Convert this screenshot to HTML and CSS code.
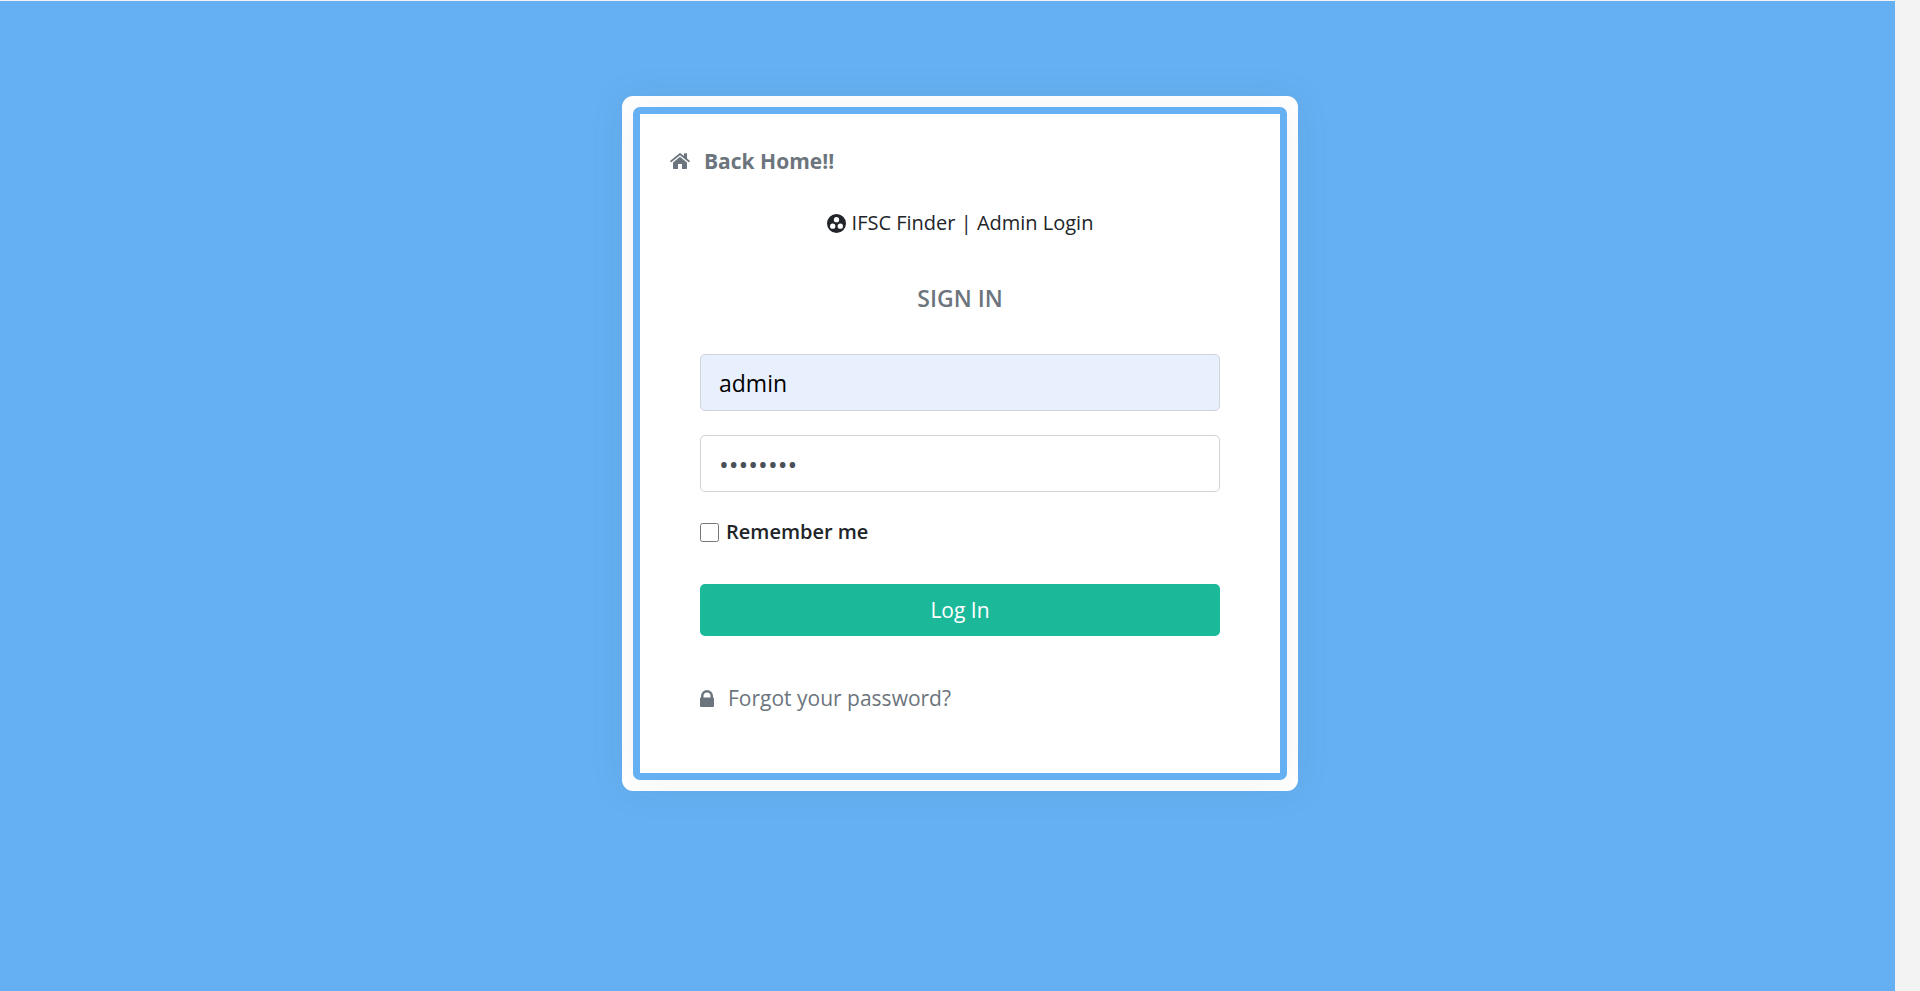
FILE: index.html
```html
<!DOCTYPE html>
<html lang="en">
<head>
<meta charset="utf-8">
<title>IFSC Finder | Admin Login</title>
<link rel="stylesheet" href="styles.css">
</head>
<body>
<main class="page">
  <div class="card">
    <div class="panel">
      <a class="home-link" href="#">
        <svg class="icon-home" viewBox="0 0 20 16" aria-hidden="true">
          <path d="M10 3.7 3 9.400V15.200q0 .8.8.8H8v-5h4v5h4.200q.8 0 .8-.8V9.400Z"/>
          <path d="M9.200.4q.8-.6 1.600 0L14 3V.8q0-.5.5-.5h2q.5 0 .5.500V5.500l2.700 2.200q.4.300.1.700l-.6.700q-.3.300-.7 0L10 2.200 1.500 9.100q-.4.300-.7 0l-.6-.7q-.3-.4.100-.700Z"/>
        </svg>
        <span>Back Home!!</span>
      </a>
      <h1 class="brand">
        <svg class="icon-brand" viewBox="0 0 20 20" aria-hidden="true">
          <path fill-rule="evenodd" d="M10 0a10 10 0 1 0 0 20 10 10 0 0 0 0-20Zm0 3.200a2.800 2.800 0 1 1 0 5.600 2.800 2.800 0 0 1 0-5.600ZM6 10a2.800 2.800 0 1 1 0 5.600A2.800 2.800 0 0 1 6 10Zm8 0a2.800 2.800 0 1 1 0 5.600 2.800 2.800 0 0 1 0-5.600Z"/>
        </svg>
        <span>IFSC Finder | Admin Login</span>
      </h1>
      <h2 class="title">SIGN IN</h2>
      <form class="form">
        <input class="field field-filled" type="text" value="admin" aria-label="Username">
        <input class="field field-password" type="password" value="password" aria-label="Password">
        <div class="remember">
          <input class="check" type="checkbox" id="remember">
          <label for="remember">Remember me</label>
        </div>
        <button class="submit" type="submit">Log In</button>
        <a class="forgot" href="#">
          <svg class="icon-lock" viewBox="0 0 14 17" aria-hidden="true">
            <path fill-rule="evenodd" d="M1 7.500V6a6 6 0 0 1 12 0v1.500q1 0 1 1V16q0 1-1 1H1q-1 0-1-1V8.500q0-1 1-1Zm2.500 0h7V6a3.500 3.500 0 0 0-7 0Z"/>
          </svg>
          <span>Forgot your password?</span>
        </a>
      </form>
    </div>
  </div>
</main>
</body>
</html>
```
FILE: styles.css
```css
* {
  box-sizing: border-box;
}

body {
  margin: 0;
  padding: 1px 25px 0 0;
  background: #f3f3f3;
  color: #212529;
  font-family: "Segoe UI", "Open Sans", "Noto Sans", sans-serif;
  font-size: 21px;
  line-height: 32px;
}

.page {
  min-height: calc(100vh - 1px);
  padding: 95px 0 95px 25px;
  background: #64b0f2;
}

.card {
  max-width: 676px;
  margin: 0 auto;
  padding: 11px;
  border-radius: 11px;
  background: #fff;
  box-shadow: 0 0 35px rgba(120, 135, 155, 0.08);
}

.panel {
  padding: 31px 60px 59px;
  border: 7px solid #64b0f2;
  border-radius: 7px;
  background: #fff;
  background-clip: padding-box;
  box-shadow: 0 0 35px rgba(100, 100, 100, 0.08);
}

.home-link {
  display: flex;
  align-items: center;
  gap: 14px;
  margin: 0 0 30px -30px;
  color: #6c757d;
  font-weight: 700;
  text-decoration: none;
}

svg {
  display: block;
  flex: none;
  fill: currentColor;
}

.icon-home {
  width: 20px;
  height: 16px;
}

.brand {
  display: flex;
  justify-content: center;
  align-items: center;
  gap: 6px;
  margin: 0 0 43px;
  font-size: 20px;
  font-weight: 400;
}

.icon-brand {
  width: 19px;
  height: 19px;
}

.title {
  margin: 0 0 40px;
  color: #6c757d;
  font-size: 23px;
  font-weight: 600;
  text-align: center;
}

.form {
  display: flex;
  flex-direction: column;
}

.field {
  width: 100%;
  height: 57px;
  margin: 0 0 24px;
  padding: 1px 18px 0;
  border: 1px solid #ced4da;
  border-radius: 5px;
  background: #fff;
  color: #495057;
  font: inherit;
  font-size: 23px;
}

.field-filled {
  background: #e8effd;
  color: #000;
}

.field-password {
  font-size: 26px;
}

.remember {
  display: flex;
  align-items: center;
  gap: 7px;
  margin-bottom: 36px;
  font-size: 20px;
  font-weight: 600;
}

.check {
  width: 19px;
  height: 19px;
  margin: 0;
}

.submit {
  height: 52px;
  padding: 0;
  border: 0;
  border-radius: 5px;
  background: #1bb99a;
  color: #fff;
  font: inherit;
}

.forgot {
  display: flex;
  align-items: center;
  gap: 14px;
  margin-top: 46px;
  color: #6c757d;
  text-decoration: none;
}

.icon-lock {
  width: 14px;
  height: 17px;
}
```
